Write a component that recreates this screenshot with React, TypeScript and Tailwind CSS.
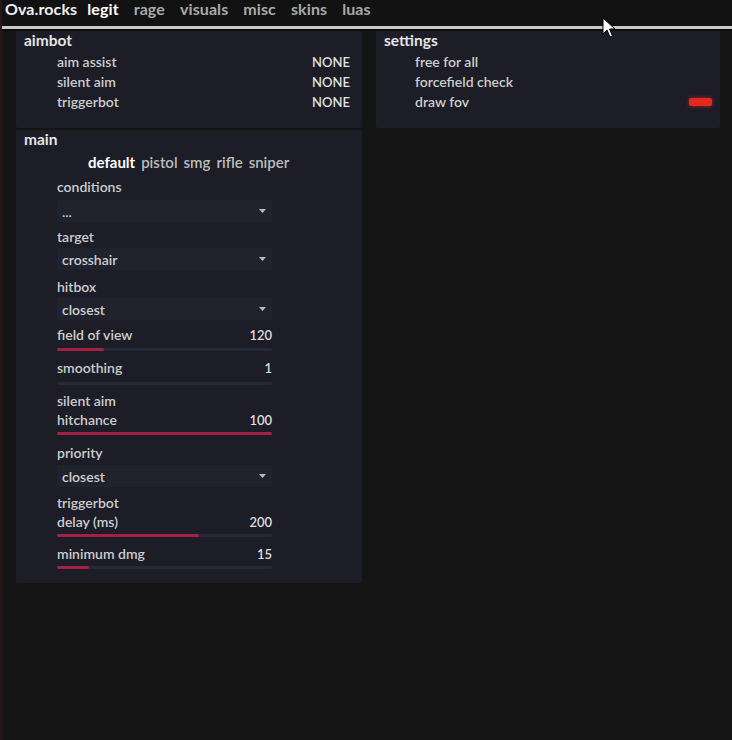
import React from 'react';

const font = { fontFamily: 'Lato, "Open Sans", sans-serif' };

const tabs = ['rage', 'visuals', 'misc', 'skins', 'luas'];
const weapons = ['pistol', 'smg', 'rifle', 'sniper'];

function Label({ text, value, className = '' }: { text: string; value?: string; className?: string }) {
  return (
    <div className={`flex h-[18px] items-baseline justify-between leading-[18px] text-[14px] font-semibold text-[#cdcdcd] ${className}`}>
      <span>{text}</span>
      {value && <span className="text-[13px] text-[#dedede]">{value}</span>}
    </div>
  );
}

function Dropdown({ text, className = '' }: { text: string; className?: string }) {
  return (
    <div className={`flex h-[22px] items-center justify-between bg-[#20222d] pl-[5px] pr-[6px] text-[14px] font-semibold text-[#cfcfcf] ${className}`}>
      <span>{text}</span>
      <svg width="7" height="4" viewBox="0 0 7 4">
        <path d="M0 0 L7 0 L3.5 4 Z" fill="#b8b8b8" />
      </svg>
    </div>
  );
}

function Bar({ pct, className = '' }: { pct: number; className?: string }) {
  return (
    <div className={`h-[3px] w-full rounded-full bg-[#272936] ${className}`}>
      <div className="h-full rounded-full bg-[#a51f45]" style={{ width: `${pct}%` }} />
    </div>
  );
}

function Panel({ title, children, className = '' }: { title: string; children: React.ReactNode; className?: string }) {
  return (
    <div className={`rounded-[2px] bg-[#1c1d27] ${className}`}>
      <div className="h-[18px] pl-2 leading-[18px] text-[15.5px] font-bold text-[#e4e4e4]">{title}</div>
      {children}
    </div>
  );
}

export default function App() {
  return (
    <div className="relative h-[740px] w-[732px] overflow-hidden bg-[#151515] border-l-2 border-[#2a1616]" style={font}>
      {/* top tabs */}
      <div className="flex h-[26px] items-start gap-[15px] bg-[#121212] pl-[3px] text-[16px] font-bold leading-[18px] tracking-[0.1px]">
        <span className="text-[#f0f0f0]">Ova.rocks</span>
        <span className="-ml-[5px] text-white">legit</span>
        {tabs.map((t) => (
          <span key={t} className="text-[#a9a9a9]">{t}</span>
        ))}
      </div>
      <div className="h-[3px] bg-[#c9c9c9]" />
      <div className="h-[2px] bg-[#0c0c0c]" />

      <div className="flex gap-[14px] pl-[14px]">
        <div className="flex w-[346px] flex-col gap-[2px]">
          <Panel title="aimbot" className="h-[97px]">
            <div className="mt-[3px] pl-[41px] pr-3">
              {['aim assist', 'silent aim', 'triggerbot'].map((n) => (
                <div key={n} className="flex h-5 items-baseline justify-between leading-5 text-[14px] font-semibold text-[#cdcdcd]">
                  <span>{n}</span>
                  <span className="text-[13px] text-[#e2e2e2]">NONE</span>
                </div>
              ))}
            </div>
          </Panel>

          <Panel title="main" className="pb-[14px]">
            <div className="mt-[5px] flex h-[18px] items-center gap-[6px] pl-[72px] text-[15px] font-semibold leading-[18px]">
              <span className="font-bold text-white">default</span>
              {weapons.map((w) => (
                <span key={w} className="text-[#bdbdbd]">{w}</span>
              ))}
            </div>
            <div className="ml-[41px] w-[215px]">
              <Label text="conditions" className="mt-[7px]" />
              <Dropdown text="..." className="mt-1" />
              <Label text="target" className="mt-[6px]" />
              <Dropdown text="crosshair" className="mt-[2px]" />
              <Label text="hitbox" className="mt-2" />
              <Dropdown text="closest" className="mt-[2px]" />
              <Label text="field of view" value="120" className="mt-[6px]" />
              <Bar pct={22} className="mt-1" />
              <Label text="smoothing" value="1" className="mt-2" />
              <Bar pct={0} className="mt-[5px]" />
              <Label text="silent aim" className="mt-[7px]" />
              <Label text="hitchance" value="100" className="mt-[1px]" />
              <Bar pct={100} className="mt-[3px]" />
              <Label text="priority" className="mt-[9px]" />
              <Dropdown text="closest" className="mt-[3px]" />
              <Label text="triggerbot" className="mt-[7px]" />
              <Label text="delay (ms)" value="200" className="mt-[1px]" />
              <Bar pct={66} className="mt-[3px]" />
              <Label text="minimum dmg" value="15" className="mt-2" />
              <Bar pct={15} className="mt-[3px]" />
            </div>
          </Panel>
        </div>

        <div className="w-[344px]">
          <Panel title="settings" className="h-[97px]">
            <div className="mt-[3px] pl-[39px] pr-2">
              {['free for all', 'forcefield check', 'draw fov'].map((n, i) => (
                <div key={n} className="flex h-5 items-center justify-between leading-5 text-[14px] font-semibold text-[#cdcdcd]">
                  <span>{n}</span>
                  {i === 2 && <span className="h-2 w-[23px] rounded-[2px] bg-[#e3281f] shadow-[0_0_4px_rgba(227,40,31,0.7)]" />}
                </div>
              ))}
            </div>
          </Panel>
        </div>
      </div>

      {/* mouse cursor */}
      <svg className="absolute left-[600px] top-[17px]" width="14" height="22" viewBox="0 0 14 22">
        <path d="M1 1 L1 17 L5 13 L8 20 L10.5 19 L7.5 12 L13 12 Z" fill="#fff" stroke="#000" strokeWidth="1" />
      </svg>
    </div>
  );
}
